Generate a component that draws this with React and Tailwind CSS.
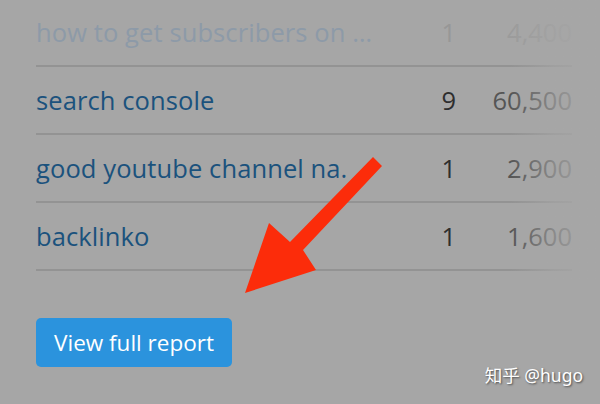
import React from "react";

const rows = [
  { name: "how to get subscribers on …", pos: "1", vol: "4,400", faded: true },
  { name: "search console", pos: "9", vol: "60,500" },
  { name: "good youtube channel na.", pos: "1", vol: "2,900" },
  { name: "backlinko", pos: "1", vol: "1,600" },
];

export default function App() {
  return (
    <div
      className="relative w-[600px] h-[404px] overflow-hidden bg-[#a6a6a6]"
      style={{ fontFamily: '"Open Sans", "Noto Sans", sans-serif' }}
    >
      <div className="flex flex-col mt-[-1px] pl-[36px] pr-[28px]">
        {rows.map((r, i) => (
          <div
            key={i}
            className="flex items-center h-[68px] border-b-2 border-[#939393] text-[25.5px]"
          >
            <span
              className={
                "flex-1 tracking-[0.1px] whitespace-nowrap " +
                (r.faded ? "text-[#8d9aa8]" : "text-[#1b527d]")
              }
            >
              {r.name}
            </span>
            <span
              className={
                "w-[30px] text-right " +
                (r.faded ? "text-[#979797]" : "text-[#2e2e2e]")
              }
            >
              {r.pos}
            </span>
            <span
              className={
                "w-[116px] text-right " +
                (r.faded ? "text-[#9b9b9b]" : "text-[#555555]")
              }
            >
              {r.vol}
            </span>
          </div>
        ))}
      </div>

      <div className="absolute top-0 right-0 w-[90px] h-[280px] bg-gradient-to-r from-[#a6a6a600] via-[#a6a6a6aa] to-[#a6a6a6]" />

      <div className="pl-[36px] pt-[47px]">
        <button className="w-[196px] h-[49px] rounded-[5px] bg-[#2b93dd] text-white text-[22.5px] flex items-center justify-center">
          View full report
        </button>
      </div>

      <svg
        className="absolute left-0 top-0"
        width="600"
        height="404"
        viewBox="0 0 600 404"
      >
        <polygon
          points="373,157 382,166 303,250 316,270 245,293 269,223 290,242"
          fill="#fc2c0a"
        />
      </svg>

      <div
        className="absolute right-[17px] bottom-[16px] text-white text-[17.5px] [text-shadow:1px_1px_2px_rgba(0,0,0,0.55)]"
        style={{ fontFamily: '"Noto Sans", "Noto Sans CJK SC", sans-serif' }}
      >
        知乎 @hugo
      </div>
    </div>
  );
}
